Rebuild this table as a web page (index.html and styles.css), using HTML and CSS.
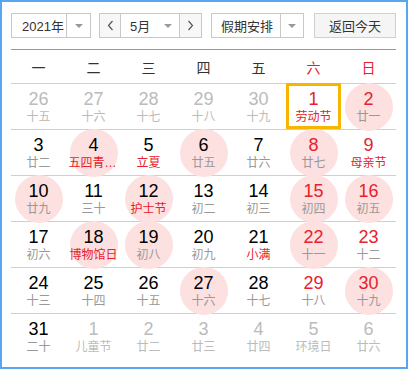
FILE: index.html
```html
<!DOCTYPE html>
<html lang="zh">
<head>
<meta charset="utf-8">
<link rel="stylesheet" href="styles.css">
</head>
<body>
<div class="cal">
  <div class="toolbar">
    <div class="sel year">
      <div class="txt">2021年</div>
      <div class="arr"><span class="caret"></span></div>
    </div>
    <div class="sel month">
      <div class="nav prev"><svg width="7" height="11" viewBox="0 0 7 11"><polyline points="5.5,1 1.5,5.5 5.5,10" fill="none" stroke="#555" stroke-width="1.2"/></svg></div>
      <div class="mtxt"><span>5月</span><span class="caret"></span></div>
      <div class="nav next"><svg width="7" height="11" viewBox="0 0 7 11"><polyline points="1.5,1 5.5,5.5 1.5,10" fill="none" stroke="#555" stroke-width="1.2"/></svg></div>
    </div>
    <div class="sel holiday">
      <div class="txt">假期安排</div>
      <div class="arr"><span class="caret"></span></div>
    </div>
    <div class="btn">返回今天</div>
  </div>

  <div class="week">
    <div>一</div><div>二</div><div>三</div><div>四</div><div>五</div><div class="red">六</div><div class="red">日</div>
  </div>

  <div class="row">
    <div class="cell other"><div class="num">26</div><div class="lun">十五</div></div>
    <div class="cell other"><div class="num">27</div><div class="lun">十六</div></div>
    <div class="cell other"><div class="num">28</div><div class="lun">十七</div></div>
    <div class="cell other"><div class="num">29</div><div class="lun">十八</div></div>
    <div class="cell other"><div class="num">30</div><div class="lun">十九</div></div>
    <div class="cell we today"><div class="num">1</div><div class="lun fest">劳动节</div></div>
    <div class="cell we hl"><div class="num">2</div><div class="lun">廿一</div></div>
  </div>
  <div class="row">
    <div class="cell"><div class="num">3</div><div class="lun">廿二</div></div>
    <div class="cell hl"><div class="num">4</div><div class="lun fest">五四青年节</div></div>
    <div class="cell"><div class="num">5</div><div class="lun fest">立夏</div></div>
    <div class="cell hl"><div class="num">6</div><div class="lun">廿五</div></div>
    <div class="cell"><div class="num">7</div><div class="lun">廿六</div></div>
    <div class="cell we hl"><div class="num">8</div><div class="lun">廿七</div></div>
    <div class="cell we"><div class="num">9</div><div class="lun fest">母亲节</div></div>
  </div>
  <div class="row">
    <div class="cell hl"><div class="num">10</div><div class="lun">廿九</div></div>
    <div class="cell"><div class="num">11</div><div class="lun">三十</div></div>
    <div class="cell hl"><div class="num">12</div><div class="lun fest">护士节</div></div>
    <div class="cell"><div class="num">13</div><div class="lun">初二</div></div>
    <div class="cell"><div class="num">14</div><div class="lun">初三</div></div>
    <div class="cell we hl"><div class="num">15</div><div class="lun">初四</div></div>
    <div class="cell we hl"><div class="num">16</div><div class="lun">初五</div></div>
  </div>
  <div class="row">
    <div class="cell"><div class="num">17</div><div class="lun">初六</div></div>
    <div class="cell hl"><div class="num">18</div><div class="lun fest">博物馆日</div></div>
    <div class="cell hl"><div class="num">19</div><div class="lun">初八</div></div>
    <div class="cell"><div class="num">20</div><div class="lun">初九</div></div>
    <div class="cell"><div class="num">21</div><div class="lun fest">小满</div></div>
    <div class="cell we hl"><div class="num">22</div><div class="lun">十一</div></div>
    <div class="cell we"><div class="num">23</div><div class="lun">十二</div></div>
  </div>
  <div class="row">
    <div class="cell"><div class="num">24</div><div class="lun">十三</div></div>
    <div class="cell"><div class="num">25</div><div class="lun">十四</div></div>
    <div class="cell"><div class="num">26</div><div class="lun">十五</div></div>
    <div class="cell hl"><div class="num">27</div><div class="lun">十六</div></div>
    <div class="cell"><div class="num">28</div><div class="lun">十七</div></div>
    <div class="cell we"><div class="num">29</div><div class="lun">十八</div></div>
    <div class="cell we hl"><div class="num">30</div><div class="lun">十九</div></div>
  </div>
  <div class="row last">
    <div class="cell"><div class="num">31</div><div class="lun">二十</div></div>
    <div class="cell other"><div class="num">1</div><div class="lun">儿童节</div></div>
    <div class="cell other"><div class="num">2</div><div class="lun">廿二</div></div>
    <div class="cell other"><div class="num">3</div><div class="lun">廿三</div></div>
    <div class="cell other"><div class="num">4</div><div class="lun">廿四</div></div>
    <div class="cell other"><div class="num">5</div><div class="lun">环境日</div></div>
    <div class="cell other"><div class="num">6</div><div class="lun">廿六</div></div>
  </div>
</div>
</body>
</html>
```
FILE: styles.css
```css
body {
  margin: 0;
  font-family: "Liberation Sans", "Noto Sans CJK SC", sans-serif;
  background: #fff;
}
.cal {
  box-sizing: border-box;
  width: 408px;
  height: 369px;
  border: 2px solid #58a6f2;
  padding: 11px 10px 0 9px;
  background: #fff;
}
.toolbar {
  display: flex;
  height: 25px;
}
.sel {
  box-sizing: border-box;
  display: flex;
  height: 25px;
  border: 1px solid #c8c8c8;
  font-size: 13px;
  color: #333;
  background: #fff;
}
.sel .txt {
  flex: 1;
  display: flex;
  align-items: center;
}
.sel .arr {
  display: flex;
  align-items: center;
  justify-content: center;
  border-left: 1px solid #c8c8c8;
}
.caret {
  width: 0;
  height: 0;
  border-top: 4px solid #999;
  border-left: 4px solid transparent;
  border-right: 4px solid transparent;
}
.year {
  width: 80px;
  margin-right: 8px;
}
.year .txt { padding-left: 10px; }
.year .arr { width: 23px; }
.month {
  width: 103px;
  margin-right: 9px;
}
.nav {
  width: 21px;
  display: flex;
  align-items: center;
  justify-content: center;
  background: #f7f7f7;
}
.prev { border-right: 1px solid #c8c8c8; width: 20px; }
.next { border-left: 1px solid #c8c8c8; }
.mtxt {
  flex: 1;
  display: flex;
  align-items: center;
  justify-content: space-between;
  padding: 0 7px 0 9px;
}
.holiday {
  width: 93px;
  margin-right: 10px;
}
.holiday .txt { padding-left: 9px; }
.holiday .arr { width: 22px; }
.btn {
  box-sizing: border-box;
  width: 82px;
  height: 25px;
  border: 1px solid #d0d0d0;
  background: #f5f5f5;
  font-size: 13px;
  color: #333;
  display: flex;
  align-items: center;
  justify-content: center;
}
.week {
  margin-top: 11px;
  border-top: 1px solid #5aa5f0;
  border-bottom: 1px solid #cfcfcf;
  display: grid;
  grid-template-columns: repeat(7, 55px);
  height: 33px;
  align-items: center;
  text-align: center;
  font-size: 14px;
  color: #333;
}
.week .red { color: #e8202c; }
.row {
  display: grid;
  grid-template-columns: repeat(7, 55px);
  height: 45px;
  border-bottom: 1px solid #cfcfcf;
}
.row.last { border-bottom: none; }
.cell {
  position: relative;
  text-align: center;
  padding-top: 5px;
}
.num {
  position: relative;
  z-index: 1;
  font-size: 18px;
  line-height: 20px;
  color: #000;
}
.lun {
  position: relative;
  z-index: 1;
  width: 50px;
  margin: 0 auto;
  font-size: 12px;
  line-height: 16px;
  color: #999;
  white-space: nowrap;
  overflow: hidden;
  text-overflow: ellipsis;
}
.we .num { color: #e8202c; }
.lun.fest { color: #e8202c; }
.other .num, .other .lun { color: #bbb; }
.hl::before {
  content: "";
  position: absolute;
  left: 50%;
  top: 50%;
  width: 48px;
  height: 48px;
  margin: -24px 0 0 -24px;
  border-radius: 50%;
  background: #fde0e0;
}
.today::after {
  content: "";
  position: absolute;
  left: 0;
  right: 0;
  top: -1px;
  bottom: 0;
  border: 3px solid #f7b500;
}
```
